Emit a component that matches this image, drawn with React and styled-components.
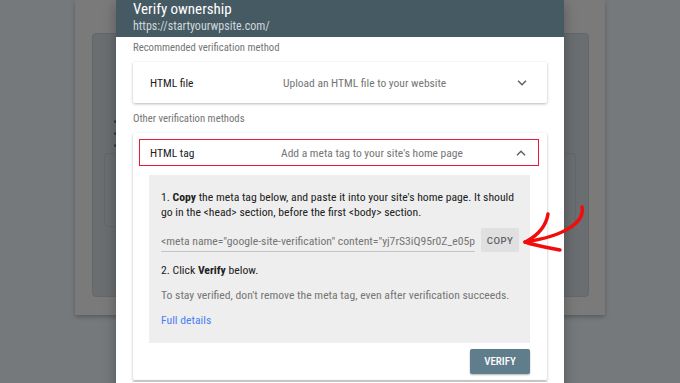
import styled, { createGlobalStyle } from 'styled-components';

const GlobalStyle = createGlobalStyle`
  html, body {
    margin: 0;
    padding: 0;
    background: #75797b;
  }
  body {
    font-family: "Roboto Condensed", Roboto, "Liberation Sans", sans-serif;
  }
`;

const Screen = styled.div`
  position: relative;
  width: 680px;
  height: 383px;
  overflow: hidden;
  background: #75797b;
`;

/* greyed-out page behind the dialog */
const BackPage = styled.div`
  margin-left: 75px;
  width: 530px;
  height: 315px;
  box-sizing: border-box;
  padding: 33px 16px 18px 17px;
  background: #7a7a7a;
  box-shadow: 0 2px 4px rgba(0, 0, 0, 0.25);
`;

const BackCard = styled.div`
  height: 100%;
  box-sizing: border-box;
  padding: 86px 12px 0 11px;
  background: #6a6e70;
  border: 1px solid #656869;
  border-radius: 4px;
`;

const BackDots = styled.div`
  display: flex;
  flex-direction: column;
  gap: 9px;
  padding-left: 10px;

  span {
    width: 3px;
    height: 3px;
    border-radius: 50%;
    background: #3a3c3d;
  }
`;

const BackBox = styled.div`
  margin-top: 6px;
  height: 72px;
  border: 1px solid #62676a;
  border-radius: 4px;
`;

const Dialog = styled.div`
  position: absolute;
  top: 0;
  left: 116px;
  width: 448px;
  height: 400px;
  background: #ffffff;
  box-shadow: 0 4px 12px rgba(0, 0, 0, 0.3);
`;

const Header = styled.div`
  height: 37px;
  box-sizing: border-box;
  padding: 0 17px;
  background: #465a63;
`;

const Title = styled.div`
  font-family: Roboto, "Liberation Sans", sans-serif;
  font-stretch: 87.5%;
  font-size: 15px;
  line-height: 19px;
  color: #ffffff;
`;

const Url = styled.div`
  font-size: 12px;
  line-height: 14px;
  color: #cfd8dc;
`;

const Body = styled.div`
  padding: 0 17px;
`;

const SectionLabel = styled.div`
  font-size: 10.7px;
  line-height: 14px;
  color: #757575;
  margin-top: ${(p) => p.$top}px;
  margin-bottom: ${(p) => p.$bottom}px;
`;

const Card = styled.div`
  background: #ffffff;
  box-shadow: 0 1px 3px rgba(0, 0, 0, 0.28);
  border-radius: 2px;
  padding: ${(p) => (p.$open ? '6px 8px 6px 6px' : '0')};
`;

const MethodRow = styled.div`
  display: flex;
  align-items: center;
  height: ${(p) => (p.$outlined ? '25px' : '41px')};
  padding: ${(p) => (p.$outlined ? '0 12px 0 10px' : '0 20px 0 17px')};
  border: ${(p) => (p.$outlined ? '1px solid #e8193c' : 'none')};
  font-size: 11.5px;
`;

const MethodName = styled.div`
  width: ${(p) => (p.$outlined ? '131px' : '133px')};
  color: #212121;
`;

const MethodDesc = styled.div`
  flex: 1;
  color: #757575;
`;

const Chevron = ({ up }) => (
  <svg width="10" height="6" viewBox="0 0 10 6">
    <polyline
      points={up ? '1,5.2 5,1.2 9,5.2' : '1,0.8 5,4.8 9,0.8'}
      fill="none"
      stroke="#5f6368"
      strokeWidth="1.5"
    />
  </svg>
);

const Instructions = styled.div`
  margin: 9px 9px 0 10px;
  padding: 15px 11px 15px 12px;
  background: #eeeeee;
  font-size: 11.7px;
  line-height: 15px;
  color: #212121;

  b {
    font-weight: 700;
  }
`;

const Step = styled.p`
  margin: ${(p) => p.$top || 0}px 0 0;
  color: ${(p) => (p.$muted ? '#757575' : '#212121')};
`;

const MetaRow = styled.div`
  display: flex;
  align-items: center;
  gap: 6px;
  margin-top: 8px;
`;

const MetaInput = styled.div`
  flex: 1;
  overflow: hidden;
  white-space: nowrap;
  font-size: 11.7px;
  line-height: 15px;
  padding: 6px 0 2px;
  color: #757575;
  border-bottom: 1px solid #c4c4c4;
`;

const CopyButton = styled.button`
  width: 38px;
  height: 24px;
  padding: 0;
  border: none;
  border-radius: 2px;
  background: #e0e0e0;
  color: #5f6368;
  font-family: Roboto, "Liberation Sans", sans-serif;
  font-size: 9.5px;
  font-weight: 500;
  letter-spacing: 0.5px;
`;

const Link = styled.a`
  color: #4a7ff5;
  text-decoration: none;
`;

const Actions = styled.div`
  display: flex;
  justify-content: flex-end;
  margin: 6px 9px 0 0;
`;

const VerifyButton = styled.button`
  width: 60px;
  height: 25px;
  padding: 0;
  border: none;
  border-radius: 2px;
  background: #607d8b;
  color: #ffffff;
  font-family: "Roboto Condensed", Roboto, sans-serif;
  font-size: 11px;
  font-weight: 500;
  box-shadow: 0 1px 2px rgba(0, 0, 0, 0.3);
`;

const NextCard = styled.div`
  margin-top: 2px;
  height: 20px;
  background: #ffffff;
  box-shadow: 0 -1px 2px rgba(0, 0, 0, 0.2);
`;

const Arrow = styled.svg`
  position: absolute;
  left: 0;
  top: 0;
  pointer-events: none;
`;

const App = () => {
  return (
    <Screen>
      <GlobalStyle />
      <BackPage>
        <BackCard>
          <BackDots>
            <span />
            <span />
            <span />
          </BackDots>
          <BackBox />
        </BackCard>
      </BackPage>

      <Dialog>
        <Header>
          <Title>Verify ownership</Title>
          <Url>https://startyourwpsite.com/</Url>
        </Header>
        <Body>
          <SectionLabel $top={4} $bottom={7}>Recommended verification method</SectionLabel>
          <Card>
            <MethodRow>
              <MethodName>HTML file</MethodName>
              <MethodDesc>Upload an HTML file to your website</MethodDesc>
              <Chevron />
            </MethodRow>
          </Card>
          <SectionLabel $top={9} $bottom={7}>Other verification methods</SectionLabel>
          <Card $open>
            <MethodRow $outlined>
              <MethodName $outlined>HTML tag</MethodName>
              <MethodDesc>Add a meta tag to your site's home page</MethodDesc>
              <Chevron up />
            </MethodRow>
            <Instructions>
              <Step>
                1. <b>Copy</b> the meta tag below, and paste it into your site's home page. It should
                go in the &lt;head&gt; section, before the first &lt;body&gt; section.
              </Step>
              <MetaRow>
                <MetaInput>
                  &lt;meta name="google-site-verification" content="yj7rS3iQ95r0Z_e05p2XkQ" /&gt;
                </MetaInput>
                <CopyButton>COPY</CopyButton>
              </MetaRow>
              <Step $top={11}>
                2. Click <b>Verify</b> below.
              </Step>
              <Step $top={10} $muted>
                To stay verified, don't remove the meta tag, even after verification succeeds.
              </Step>
              <Step $top={10}>
                <Link href="#">Full details</Link>
              </Step>
            </Instructions>
            <Actions>
              <VerifyButton>VERIFY</VerifyButton>
            </Actions>
          </Card>
          <NextCard />
        </Body>
      </Dialog>

      <Arrow width="680" height="383" viewBox="0 0 680 383">
        <g fill="none" stroke="#f20d0d" strokeWidth="3.5" strokeLinecap="round">
          <path d="M582 207 C585 222 565 236 525 242" />
          <path d="M548 214 C546 226 538 235 527 241" />
          <path d="M525 242 C537 246 550 248 560 250" />
        </g>
      </Arrow>
    </Screen>
  );
};

export default App;
